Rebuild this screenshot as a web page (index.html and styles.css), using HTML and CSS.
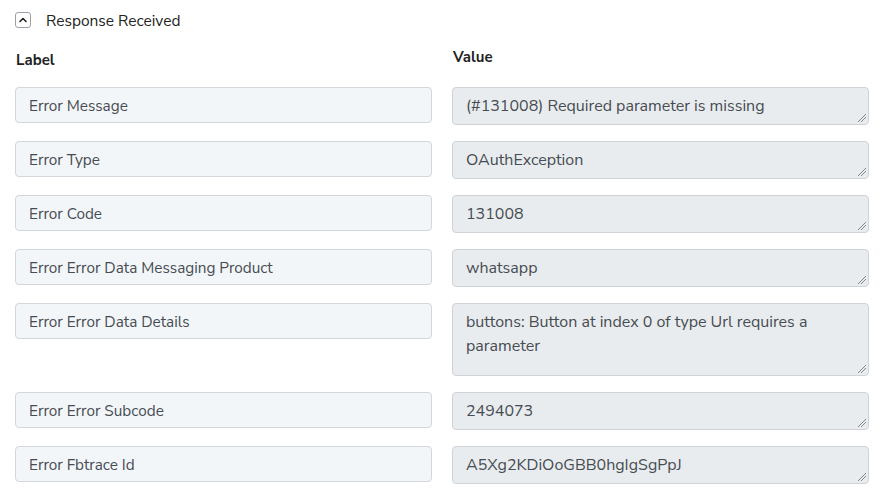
FILE: index.html
```html
<!DOCTYPE html>
<html>
<head>
<meta charset="utf-8">
<link rel="stylesheet" href="styles.css">
</head>
<body>
<div class="panel">
  <div class="title">
    <span class="toggle"><svg width="10" height="10" viewBox="0 0 10 10"><path d="M2 6.5 L5 3.5 L8 6.5" fill="none" stroke="#222" stroke-width="1.6" stroke-linecap="round" stroke-linejoin="round"/></svg></span>
    <span class="title-text">Response Received</span>
  </div>
  <div class="grid">
    <div class="head head-label">Label</div>
    <div class="head head-value">Value</div>

    <div class="label">Error Message</div>
    <div class="value">(#131008) Required parameter is missing</div>

    <div class="label">Error Type</div>
    <div class="value">OAuthException</div>

    <div class="label">Error Code</div>
    <div class="value">131008</div>

    <div class="label">Error Error Data Messaging Product</div>
    <div class="value">whatsapp</div>

    <div class="label">Error Error Data Details</div>
    <div class="value tall">buttons: Button at index 0 of type Url requires a parameter</div>

    <div class="label">Error Error Subcode</div>
    <div class="value">2494073</div>

    <div class="label">Error Fbtrace Id</div>
    <div class="value">A5Xg2KDiOoGBB0hgIgSgPpJ</div>
  </div>
</div>
</body>
</html>
```
FILE: styles.css
```css
html, body {
  margin: 0;
  padding: 0;
  background: #fff;
}
body {
  font-family: "Nunito Sans", Lato, "Open Sans", sans-serif;
  color: #333;
}
.panel {
  padding: 11px 11px 0 15px;
}
.title {
  display: flex;
  align-items: center;
  gap: 15px;
  height: 18px;
}
.toggle {
  width: 14px;
  height: 14px;
  border: 1px solid #9aa0a6;
  border-radius: 3px;
  display: flex;
  align-items: center;
  justify-content: center;
}
.title-text {
  font-size: 15.5px;
  color: #222;
}
.grid {
  display: grid;
  grid-template-columns: 417px 417px;
  column-gap: 20px;
  row-gap: 16px;
  align-items: start;
  margin-top: 17px;
}
.head {
  font-weight: bold;
  font-size: 15px;
  color: #222;
}
.head-label {
  padding-left: 1px;
  padding-top: 4px;
  margin-bottom: 1px;
}
.head-value {
  padding-left: 1px;
  padding-top: 1px;
  margin-bottom: 3px;
}
.label {
  box-sizing: border-box;
  height: 36px;
  border: 1px solid #d3d6da;
  border-radius: 4px;
  background: #f3f6f9;
  padding: 2px 13px 0;
  font-size: 15.3px;
  line-height: 32px;
  color: #464c52;
}
.value {
  position: relative;
  box-sizing: border-box;
  min-height: 38px;
  border: 1px solid #cfd3d8;
  border-radius: 4px;
  background: #e9ecef;
  padding: 6px 40px 5px 13px;
  font-size: 16px;
  line-height: 24px;
  color: #464c52;
}
.value.tall {
  height: 73px;
}
.value::after {
  content: "";
  position: absolute;
  right: 2px;
  bottom: 2px;
  width: 8px;
  height: 8px;
  background: linear-gradient(135deg, transparent 0 45%, #888 45% 52%, transparent 52% 68%, #888 68% 75%, transparent 75%);
}
```
